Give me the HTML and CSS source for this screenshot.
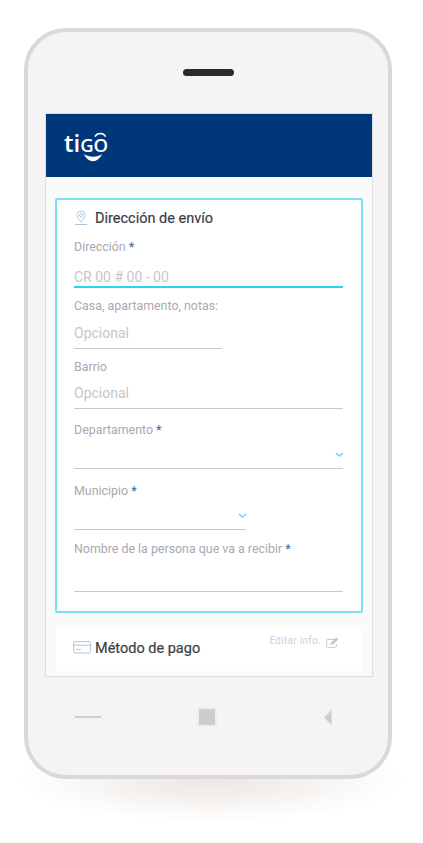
FILE: index.html
```html
<!DOCTYPE html>
<html lang="es">
<head>
<meta charset="utf-8">
<title>Dirección de envío</title>
<link rel="stylesheet" href="styles.css">
</head>
<body>
<div class="stage">
  <div class="shadow"></div>
  <div class="phone">
    <div class="speaker"></div>
    <div class="screen">
      <header class="brand">
        <svg class="logo" width="46" height="36" viewBox="0 0 46 36">
          <text class="logo-text" x="0" y="24">ti<tspan class="logo-caps">go</tspan></text>
          <path d="M31 8.6C33 4.6 39.5 4.6 41.6 8.6" class="logo-arc"/>
          <path d="M20 26C23.5 35.5 34.5 35.5 38 26C33.5 29.6 25 29.6 20 26Z" class="logo-smile"/>
        </svg>
      </header>
      <div class="content">
        <section class="card">
          <h2 class="title">
            <svg class="title-icon" width="14" height="16" viewBox="0 0 14 16">
              <path d="M7 12C4.8 9.4 2.9 7.6 2.9 5.3a4.1 4.1 0 0 1 8.2 0C11.1 7.6 9.2 9.4 7 12Z" class="ic"/>
              <circle cx="7" cy="5.2" r="1.6" class="ic"/>
              <path d="M1 14.5H13" class="ic"/>
            </svg>
            Dirección de envío
          </h2>
          <div class="field f-dir">
            <label class="label">Dirección <b class="req">*</b></label>
            <div class="input active">CR 00 # 00 - 00</div>
          </div>
          <div class="field f-casa">
            <label class="label">Casa, apartamento, notas:</label>
            <div class="input short">Opcional</div>
          </div>
          <div class="field f-barrio">
            <label class="label">Barrio</label>
            <div class="input">Opcional</div>
          </div>
          <div class="field f-depto">
            <label class="label">Departamento <b class="req">*</b></label>
            <div class="input select">
              <svg class="chev" width="9" height="5" viewBox="0 0 9 5"><path d="M1 1l3.5 3L8 1"/></svg>
            </div>
          </div>
          <div class="field f-muni">
            <label class="label">Municipio <b class="req">*</b></label>
            <div class="input select medium">
              <svg class="chev" width="9" height="5" viewBox="0 0 9 5"><path d="M1 1l3.5 3L8 1"/></svg>
            </div>
          </div>
          <div class="field f-nombre">
            <label class="label">Nombre de la persona que va a recibir <b class="req">*</b></label>
            <div class="input"></div>
          </div>
        </section>
        <section class="pay">
          <h2 class="title pay-title">
            <svg class="pay-icon" width="18" height="13" viewBox="0 0 18 13">
              <rect x=".6" y=".6" width="16.8" height="11.4" rx="1.5" class="ic"/>
              <path d="M.6 4.2H17.4" class="ic"/>
              <path d="M3 8.5H8" class="ic"/>
            </svg>
            Método de pago
          </h2>
          <div class="edit">
            Editar info.
            <svg width="13" height="11" viewBox="0 0 13 11">
              <path d="M9.5 2.5H1.7a1 1 0 0 0-1 1v5.8a1 1 0 0 0 1 1h7.6a1 1 0 0 0 1-1V7" class="ie"/>
              <path d="M4.4 8l.5-2.5L10.3.4l2.2 2L7 7.5Z" class="ief"/>
            </svg>
          </div>
        </section>
      </div>
    </div>
    <nav class="softkeys">
      <span class="key-dash"></span>
      <span class="key-square"></span>
      <svg class="key-back" width="10" height="19" viewBox="0 0 10 19"><path d="M9 1V18L1 9.5Z"/></svg>
    </nav>
  </div>
</div>
</body>
</html>
```

FILE: styles.css
```css
* { box-sizing: border-box; }
html, body { margin: 0; padding: 0; background: #fff; }
body { font-family: Roboto, "Liberation Sans", sans-serif; overflow: hidden; height: 843px; }

.stage { position: relative; width: 423px; height: 843px; padding: 28px 31px 0 24px; }

.shadow {
  position: absolute;
  left: 15px;
  top: 738px;
  width: 392px;
  height: 84px;
  border-radius: 50%;
  background: radial-gradient(closest-side, #eee7e1 0%, #f3efec 40%, #faf9f8 72%, #fff 100%);
}

.phone {
  position: relative;
  width: 368px;
  height: 751px;
  border: 4px solid #d9d9d9;
  border-radius: 42px;
  background: #f5f3f4;
  padding-top: 37px;
}

.speaker {
  width: 51px;
  height: 7px;
  margin-left: 155px;
  border-radius: 4px;
  background: #2b2b2b;
}

.screen {
  width: 328px;
  height: 564px;
  margin: 37px 0 0 17px;
  border: 1px solid #dfdddf;
  background: #fafafa;
  overflow: hidden;
}

.brand { height: 63px; background: #00377b; padding: 14px 0 0 18px; }
.logo { display: block; overflow: visible; }
.logo-text { font-family: "Open Sans", sans-serif; font-weight: 600; font-size: 24px; fill: #fff; }
.logo-caps { font-size: 18.5px; text-transform: uppercase; }
.logo-arc { fill: none; stroke: #fff; stroke-width: 1.5; }
.logo-smile { fill: #fff; }

.content { padding: 21px 9px 0; }

.card {
  height: 415px;
  border: 2px solid #7adff5;
  border-radius: 2px;
  background: #fff;
  padding: 0 18px 0 17px;
}

.title {
  display: flex;
  align-items: center;
  margin: 0;
  font-size: 14.5px;
  line-height: 18px;
  font-weight: 400;
  color: #3c4048;
  -webkit-text-stroke: .2px #3c4048;
}
.card .title { padding-top: 10px; height: 28px; }
.title-icon { margin-right: 7px; margin-top: -2px; flex: none; }
.ic { fill: none; stroke: #a9c6de; stroke-width: 1; }

.field { display: flex; flex-direction: column; }
.label { font-size: 12.4px; line-height: 14px; color: #a9a9b0; }
.req { font-weight: 500; color: #4a6f9c; }

.input {
  position: relative;
  font-size: 14px;
  line-height: 18px;
  color: #c6c6c6;
  border-bottom: 1px solid #c9c9c9;
  flex: 1;
}

.f-dir { height: 44px; margin-top: 12px; }
.f-dir .input { padding-top: 14px; border-bottom: 2px solid #2fd0f5; }
.f-casa { height: 50px; margin-top: 15px; }
.f-casa .input { padding-top: 11px; }
.f-barrio { height: 49px; margin-top: 11px; }
.f-barrio .input { padding-top: 10px; }
.f-depto { height: 46px; margin-top: 14px; }
.f-muni { height: 46px; margin-top: 15px; }
.f-nombre { height: 50px; margin-top: 12px; }

.short { width: 148px; flex: 1; }
.medium { width: 172px; }
.chev { position: absolute; right: -1px; top: 15px; }
.chev path { fill: none; stroke: #62d8f5; stroke-width: 1.4; }

.pay {
  display: flex;
  justify-content: space-between;
  margin: 15px 1px 0;
  height: 43px;
  background: #fff;
  padding: 0 23px 0 17px;
}
.pay-title { padding-top: 12px; height: 30px; }
.pay-icon { margin-right: 4px; margin-top: -4px; flex: none; }
.edit {
  display: flex;
  align-items: flex-start;
  gap: 5px;
  padding-top: 7px;
  font-size: 10px;
  line-height: 12px;
  letter-spacing: .3px;
  color: #c6d3e2;
}
.edit svg { margin-top: 2px; flex: none; }
.ie { fill: none; stroke: #c3cad4; stroke-width: 1; }
.ief { fill: #c3cad4; }

.softkeys {
  display: flex;
  align-items: center;
  justify-content: space-between;
  height: 18px;
  margin-top: 31px;
  padding: 0 55px 0 47px;
}
.key-dash { width: 26px; height: 2px; background: #cfcfcf; }
.key-square {
  width: 20px;
  height: 20px;
  margin-right: 10px;
  background: #cdcdcd;
  border: 2px solid #efedee;
}
.key-back path { fill: #cdcdcd; stroke: #efedee; stroke-width: 1; }
```
